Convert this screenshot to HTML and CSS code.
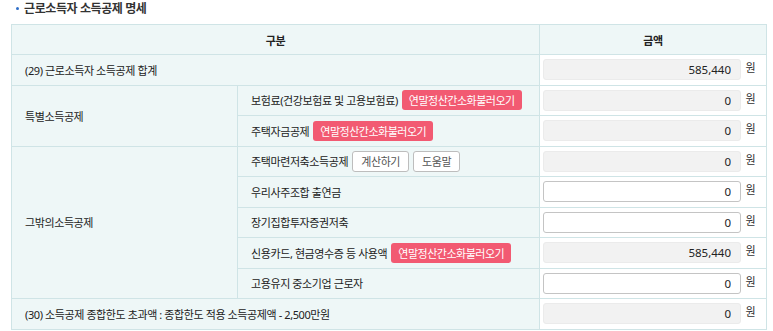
FILE: index.html
```html
<!DOCTYPE html>
<html lang="ko">
<head>
    <meta charset="UTF-8">
    <title>근로소득자 소득공제 명세</title>
    <link rel="stylesheet" href="styles.css">
</head>
<body>
    <h3 class="title"><span class="dot"></span>근로소득자 소득공제 명세</h3>
    <table class="grid">
        <colgroup>
            <col class="c1">
            <col class="c2">
            <col class="c3">
        </colgroup>
        <thead>
            <tr>
                <th colspan="2">구분</th>
                <th>금액</th>
            </tr>
        </thead>
        <tbody>
            <tr>
                <td colspan="2" class="lbl">(29) 근로소득자 소득공제 합계</td>
                <td class="amt"><input class="num ro" value="585,440" readonly> 원</td>
            </tr>
            <tr>
                <td rowspan="2" class="lbl">특별소득공제</td>
                <td class="lbl"><span class="cell">보험료(건강보험료 및 고용보험료) <button class="btn-pink">연말정산간소화불러오기</button></span></td>
                <td class="amt"><input class="num ro" value="0" readonly> 원</td>
            </tr>
            <tr>
                <td class="lbl"><span class="cell">주택자금공제 <button class="btn-pink">연말정산간소화불러오기</button></span></td>
                <td class="amt"><input class="num ro" value="0" readonly> 원</td>
            </tr>
            <tr>
                <td rowspan="5" class="lbl">그밖의소득공제</td>
                <td class="lbl"><span class="cell">주택마련저축소득공제 <button class="btn-line">계산하기</button><button class="btn-line">도움말</button></span></td>
                <td class="amt"><input class="num ro" value="0" readonly> 원</td>
            </tr>
            <tr>
                <td class="lbl">우리사주조합 출연금</td>
                <td class="amt"><input class="num" value="0"> 원</td>
            </tr>
            <tr>
                <td class="lbl">장기집합투자증권저축</td>
                <td class="amt"><input class="num" value="0"> 원</td>
            </tr>
            <tr>
                <td class="lbl"><span class="cell">신용카드, 현금영수증 등 사용액 <button class="btn-pink">연말정산간소화불러오기</button></span></td>
                <td class="amt"><input class="num ro" value="585,440" readonly> 원</td>
            </tr>
            <tr>
                <td class="lbl">고용유지 중소기업 근로자</td>
                <td class="amt"><input class="num" value="0"> 원</td>
            </tr>
            <tr>
                <td colspan="2" class="lbl">(30) 소득공제 종합한도 초과액 : 종합한도 적용 소득공제액 - 2,500만원</td>
                <td class="amt"><input class="num ro" value="0" readonly> 원</td>
            </tr>
        </tbody>
    </table>
</body>
</html>
```

FILE: styles.css
```css
body {
    font-family: "Noto Sans", "Noto Sans CJK KR", sans-serif;
    font-size: 11px;
    letter-spacing: -0.4px;
    color: #222;
    background-color: #fff;
    margin: 0;
    padding: 0 8px 0 11px;
}
.title {
    display: flex;
    align-items: center;
    font-size: 12px;
    font-weight: bold;
    letter-spacing: -0.4px;
    color: #333;
    margin: 0 0 8px 0;
    height: 16px;
    padding-left: 5px;
}
.dot {
    width: 3px;
    height: 3px;
    border-radius: 50%;
    background-color: #2f6fc9;
    margin-right: 5px;
}
.grid {
    border-collapse: collapse;
    width: 755px;
    table-layout: fixed;
}
.c1 { width: 226px; }
.c2 { width: 302px; }
.c3 { width: 227px; }
.grid th,
.grid td {
    border: 1px solid #cfe4e6;
    background-color: #eef7f7;
    height: 29.5px;
    padding: 0;
}
.grid th {
    height: 29px;
    font-weight: bold;
    color: #222;
}
.grid td.lbl {
    padding-left: 13px;
    white-space: nowrap;
}
.cell {
    display: flex;
    align-items: center;
    gap: 4px;
}
.grid td.amt {
    background-color: #fff;
    padding-left: 3px;
    white-space: nowrap;
    color: #333;
}
.num {
    box-sizing: border-box;
    width: 198px;
    height: 21px;
    border: 1px solid #c4c4c4;
    border-radius: 3px;
    background-color: #fff;
    text-align: right;
    padding: 0 9px 0 8px;
    font-family: "Noto Sans", "Noto Sans CJK KR", sans-serif;
    font-size: 11.5px;
    letter-spacing: 0;
    color: #222;
    margin-right: 2px;
    vertical-align: middle;
}
.num.ro {
    background-color: #f2f2f2;
    border-color: #ebebeb;
}
.btn-pink {
    height: 20px;
    padding: 0 7px;
    border: none;
    border-radius: 3px;
    background-color: #f25a72;
    color: #fff;
    font-family: "Noto Sans", "Noto Sans CJK KR", sans-serif;
    font-size: 11px;
    letter-spacing: -0.5px;
}
.btn-line {
    height: 21px;
    padding: 0 8px;
    border: 1px solid #bdbdbd;
    border-radius: 3px;
    background-color: #fff;
    color: #555;
    font-family: "Noto Sans", "Noto Sans CJK KR", sans-serif;
    font-size: 11px;
    letter-spacing: -0.4px;
}
```
